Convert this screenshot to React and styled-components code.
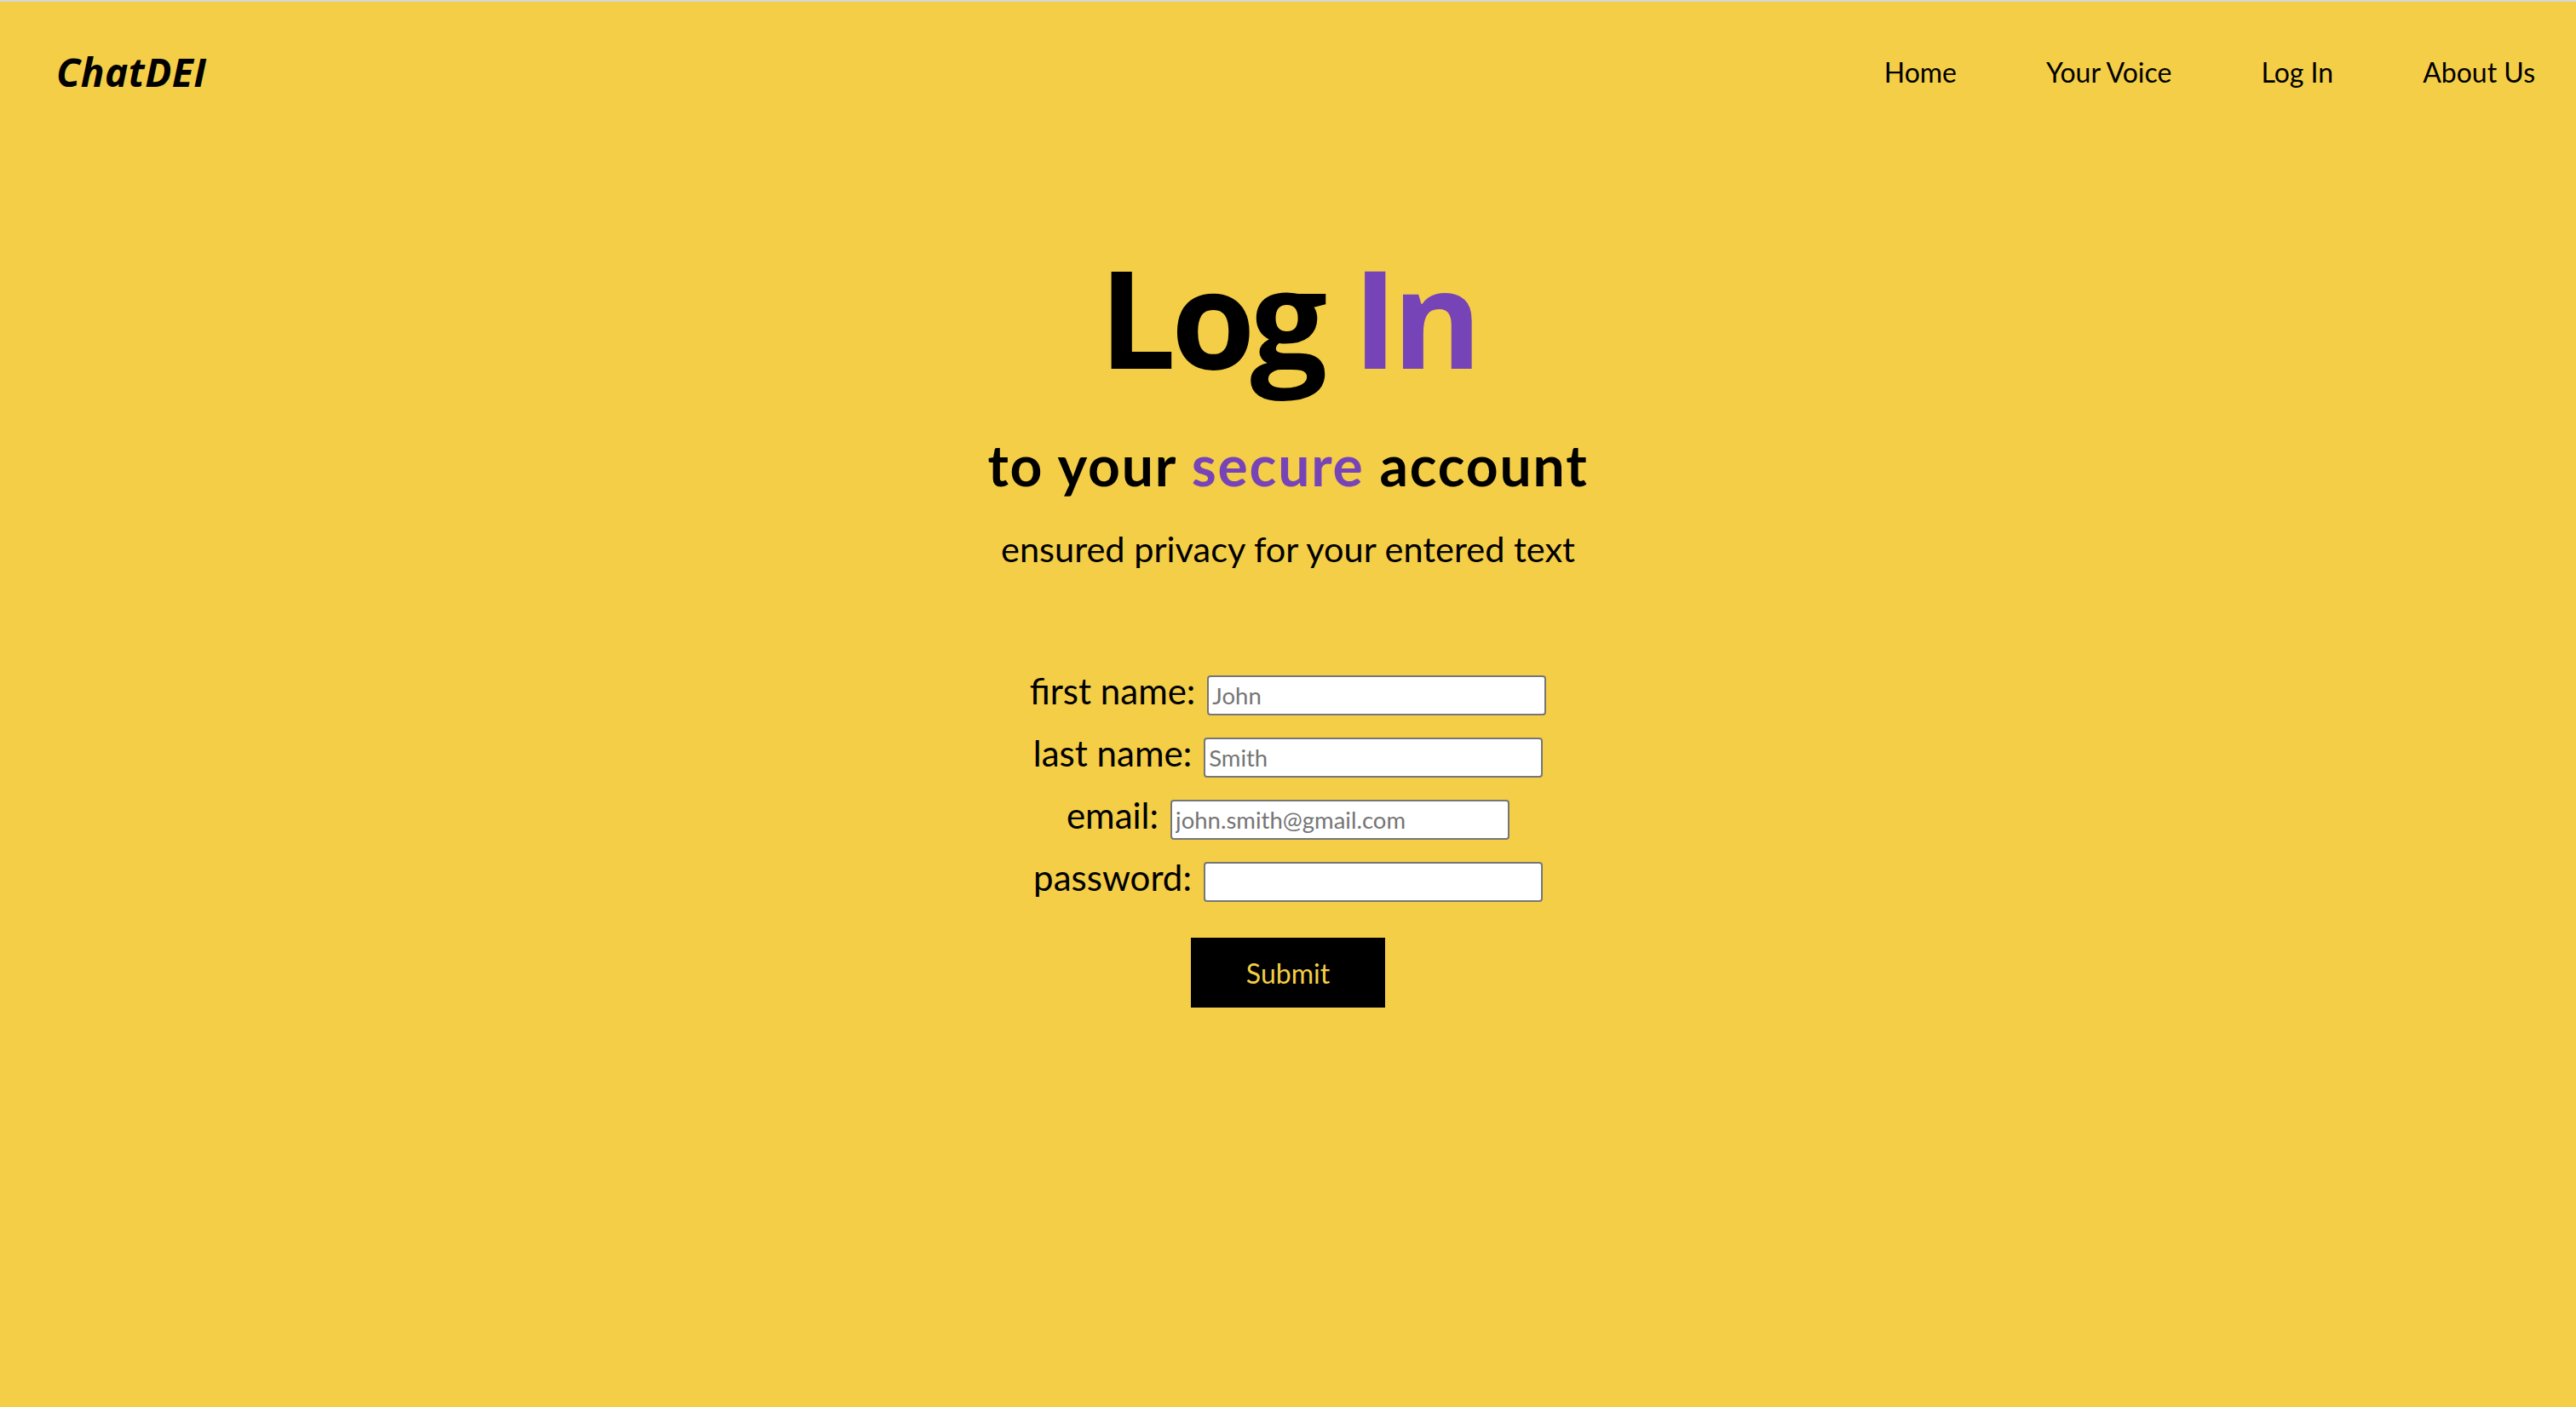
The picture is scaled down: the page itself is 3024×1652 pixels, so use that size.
import React from "react";
import styled, { createGlobalStyle } from "styled-components";

const YELLOW = "#F4CE47";
const PURPLE = "#7744B8";
const BODY_FONT = `"Trebuchet MS", "Lato", "Open Sans", sans-serif`;

const GlobalStyle = createGlobalStyle`
  html, body {
    margin: 0;
    padding: 0;
    background: ${YELLOW};
  }
  body {
    font-family: ${BODY_FONT};
    color: #000;
    min-height: 1652px;
    border-top: 2px solid #d6d6d6;
    box-sizing: border-box;
  }
  * { box-sizing: border-box; }
`;

const Page = styled.div`
  display: flex;
  flex-direction: column;
  min-height: 1650px;
`;

const Header = styled.header`
  display: flex;
  align-items: center;
  justify-content: space-between;
  height: 164px;
  padding: 0 48px 0 66px;
`;

const Logo = styled.div`
  font-family: "Open Sans", sans-serif;
  font-weight: 700;
  font-style: italic;
  font-size: 46px;
  letter-spacing: 0.5px;
`;

const Nav = styled.nav`
  display: flex;
  align-items: center;
  gap: 105px;
`;

const NavLink = styled.a`
  font-size: 32px;
  color: #000;
  text-decoration: none;
  cursor: pointer;
`;

const Main = styled.main`
  display: flex;
  flex-direction: column;
  align-items: center;
  text-align: center;
`;

const Title = styled.h1`
  margin: 125px 0 0;
  font-family: "Open Sans", sans-serif;
  font-weight: 700;
  font-size: 160px;
  line-height: 160px;
  letter-spacing: -6px;
`;

const Accent = styled.span`
  color: ${PURPLE};
`;

const Subtitle = styled.h2`
  margin: 56px 0 0;
  font-weight: 700;
  font-size: 66px;
  line-height: 78px;
  letter-spacing: 1.8px;
`;

const Tagline = styled.p`
  margin: 34px 0 0;
  font-size: 41.5px;
  line-height: 50px;
`;

const Form = styled.form`
  display: flex;
  flex-direction: column;
  align-items: center;
  gap: 24px;
  margin-top: 122px;
`;

const Row = styled.div`
  display: flex;
  align-items: baseline;
  justify-content: center;
  gap: 14px;
`;

const Label = styled.label`
  font-size: 42px;
  line-height: 40px;
`;

const Input = styled.input`
  width: 398px;
  height: 47px;
  padding: 2px 4px;
  border: 2px solid #767676;
  border-radius: 4px;
  background: #fff;
  font-family: ${BODY_FONT};
  font-size: 27.5px;
  color: #000;
  &::placeholder {
    color: #757575;
  }
`;

const Submit = styled.button`
  margin-top: 18px;
  width: 228px;
  height: 82px;
  border: none;
  background: #000;
  color: ${YELLOW};
  font-family: ${BODY_FONT};
  font-size: 32px;
  cursor: pointer;
`;

const fields = [
  { id: "first", label: "first name:", placeholder: "John", type: "text" },
  { id: "last", label: "last name:", placeholder: "Smith", type: "text" },
  { id: "email", label: "email:", placeholder: "john.smith@gmail.com", type: "email" },
  { id: "password", label: "password:", placeholder: "", type: "password" },
];

export default function App() {
  return (
    <>
      <GlobalStyle />
      <Page>
        <Header>
          <Logo>ChatDEI</Logo>
          <Nav>
            <NavLink>Home</NavLink>
            <NavLink>Your Voice</NavLink>
            <NavLink>Log In</NavLink>
            <NavLink>About Us</NavLink>
          </Nav>
        </Header>
        <Main>
          <Title>
            Log <Accent>In</Accent>
          </Title>
          <Subtitle>
            to your <Accent>secure</Accent> account
          </Subtitle>
          <Tagline>ensured privacy for your entered text</Tagline>
          <Form onSubmit={(e) => e.preventDefault()}>
            {fields.map((f) => (
              <Row key={f.id}>
                <Label htmlFor={f.id}>{f.label}</Label>
                <Input id={f.id} type={f.type} placeholder={f.placeholder} />
              </Row>
            ))}
            <Submit type="submit">Submit</Submit>
          </Form>
        </Main>
      </Page>
    </>
  );
}
